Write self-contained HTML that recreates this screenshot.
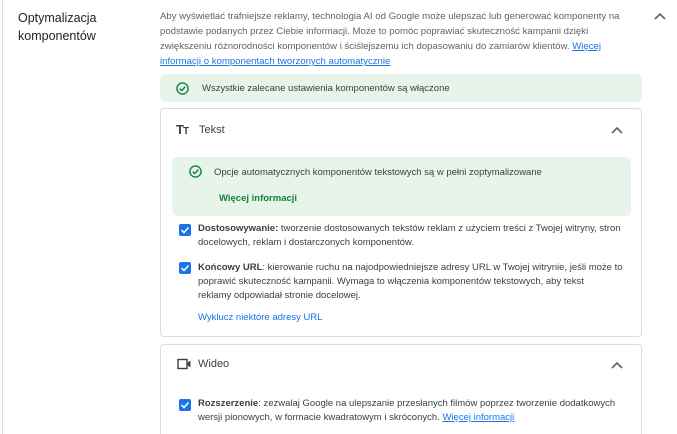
<!DOCTYPE html>
<html><head><meta charset="utf-8"><style>
*{margin:0;padding:0;box-sizing:border-box}
html,body{width:677px;height:434px;overflow:hidden;background:#fff}
body{font-family:"Liberation Sans",Arial,sans-serif;color:#3c4043}
#w{position:relative;width:677px;height:434px;overflow:hidden}
.a{position:absolute;white-space:nowrap}
.lb{left:18px;font-size:12.5px;color:#202124}
.d{left:160px;font-size:9.6px;color:#5f6368;line-height:15px}
a{color:#1a73e8;text-decoration:underline}
.g{position:absolute;background:#e6f4ea;border-radius:6px}
.card{position:absolute;left:160px;width:482px;border:1px solid #dadce0;border-radius:4px}
.t{font-size:9.5px;color:#3c4043;line-height:14px}
.cb{position:absolute;width:12px;height:12px;background:#1a73e8;border-radius:2px}
.cb svg{position:absolute;left:1px;top:1px}
</style></head><body><div id="w">
<div style="position:absolute;left:2px;top:0;width:1px;height:434px;background:#dadce0"></div>
<div class="a lb" style="top:11px">Optymalizacja</div>
<div class="a lb" style="top:29px">komponentów</div>
<div class="a d" style="top:9px">Aby wyświetlać trafniejsze reklamy, technologia AI od Google może ulepszać lub generować komponenty na<br>podstawie podanych przez Ciebie informacji. Może to pomóc poprawiać skuteczność kampanii dzięki<br>zwiększeniu różnorodności komponentów i ściślejszemu ich dopasowaniu do zamiarów klientów. <a>Więcej</a><br><a>informacji o komponentach tworzonych automatycznie</a></div>
<svg class="a" style="left:654px;top:12px" width="12" height="8" viewBox="0 0 12 8"><path d="M1 7L6 2L11 7" fill="none" stroke="#5f6368" stroke-width="1.6"/></svg>

<div class="g" style="left:160px;top:74px;width:482px;height:28px"></div>
<svg class="a" style="left:176px;top:82px" width="13" height="13" viewBox="0 0 14 14"><circle cx="7" cy="7" r="6" fill="none" stroke="#188038" stroke-width="1.5"/><path d="M4 7.2L6.2 9.3L10 5" fill="none" stroke="#188038" stroke-width="1.5"/></svg>
<div class="a t" style="left:202px;top:82px">Wszystkie zalecane ustawienia komponentów są włączone</div>

<div class="card" style="top:108px;height:229px"></div>
<div class="a" style="left:176px;top:122px;font-size:13px;font-weight:bold;color:#3c4043;letter-spacing:-1px">T<span style="font-size:10px">T</span></div>
<div class="a" style="left:199px;top:124px;font-size:11px;color:#3c4043">Tekst</div>
<svg class="a" style="left:611px;top:126px" width="12" height="8" viewBox="0 0 12 8"><path d="M1 7L6 2L11 7" fill="none" stroke="#5f6368" stroke-width="1.6"/></svg>

<div class="g" style="left:172px;top:157px;width:459px;height:59px"></div>
<svg class="a" style="left:189px;top:165px" width="13" height="13" viewBox="0 0 14 14"><circle cx="7" cy="7" r="6" fill="none" stroke="#188038" stroke-width="1.5"/><path d="M4 7.2L6.2 9.3L10 5" fill="none" stroke="#188038" stroke-width="1.5"/></svg>
<div class="a t" style="left:214px;top:166px">Opcje automatycznych komponentów tekstowych są w pełni zoptymalizowane</div>
<div class="a" style="left:219px;top:193px;font-size:9.5px;color:#188038;font-weight:bold">Więcej informacji</div>

<div class="cb" style="left:179px;top:224px"><svg width="10" height="10" viewBox="0 0 10 10"><path d="M1.5 5L4 7.5L8.5 2.5" fill="none" stroke="#fff" stroke-width="1.5"/></svg></div>
<div class="a t" style="left:198px;top:222px"><b>Dostosowywanie:</b> tworzenie dostosowanych tekstów reklam z użyciem treści z Twojej witryny, stron<br>docelowych, reklam i dostarczonych komponentów.</div>
<div class="cb" style="left:179px;top:262px"><svg width="10" height="10" viewBox="0 0 10 10"><path d="M1.5 5L4 7.5L8.5 2.5" fill="none" stroke="#fff" stroke-width="1.5"/></svg></div>
<div class="a t" style="left:198px;top:261px"><b>Końcowy URL</b>: kierowanie ruchu na najodpowiedniejsze adresy URL w Twojej witrynie, jeśli może to<br>poprawić skuteczność kampanii. Wymaga to włączenia komponentów tekstowych, aby tekst<br>reklamy odpowiadał stronie docelowej.</div>
<div class="a" style="left:198px;top:312px;font-size:9.5px;color:#1a73e8">Wyklucz niektóre adresy URL</div>

<div class="card" style="top:344px;height:90px;border-bottom:none;border-radius:4px 4px 0 0"></div>
<svg class="a" style="left:177px;top:358px" width="15" height="12" viewBox="0 0 15 12"><rect x="1" y="1.5" width="9" height="9" fill="none" stroke="#3c4043" stroke-width="1.4"/><path d="M10 5L13.5 2.5V9.5L10 7Z" fill="#3c4043"/></svg>
<div class="a" style="left:198px;top:358px;font-size:11px;color:#3c4043">Wideo</div>
<svg class="a" style="left:611px;top:361px" width="12" height="8" viewBox="0 0 12 8"><path d="M1 7L6 2L11 7" fill="none" stroke="#5f6368" stroke-width="1.6"/></svg>

<div class="cb" style="left:179px;top:399px"><svg width="10" height="10" viewBox="0 0 10 10"><path d="M1.5 5L4 7.5L8.5 2.5" fill="none" stroke="#fff" stroke-width="1.5"/></svg></div>
<div class="a t" style="left:198px;top:397px"><b>Rozszerzenie</b>: zezwalaj Google na ulepszanie przesłanych filmów poprzez tworzenie dodatkowych<br>wersji pionowych, w formacie kwadratowym i skróconych. <a>Więcej informacji</a></div>
</div></body></html>
